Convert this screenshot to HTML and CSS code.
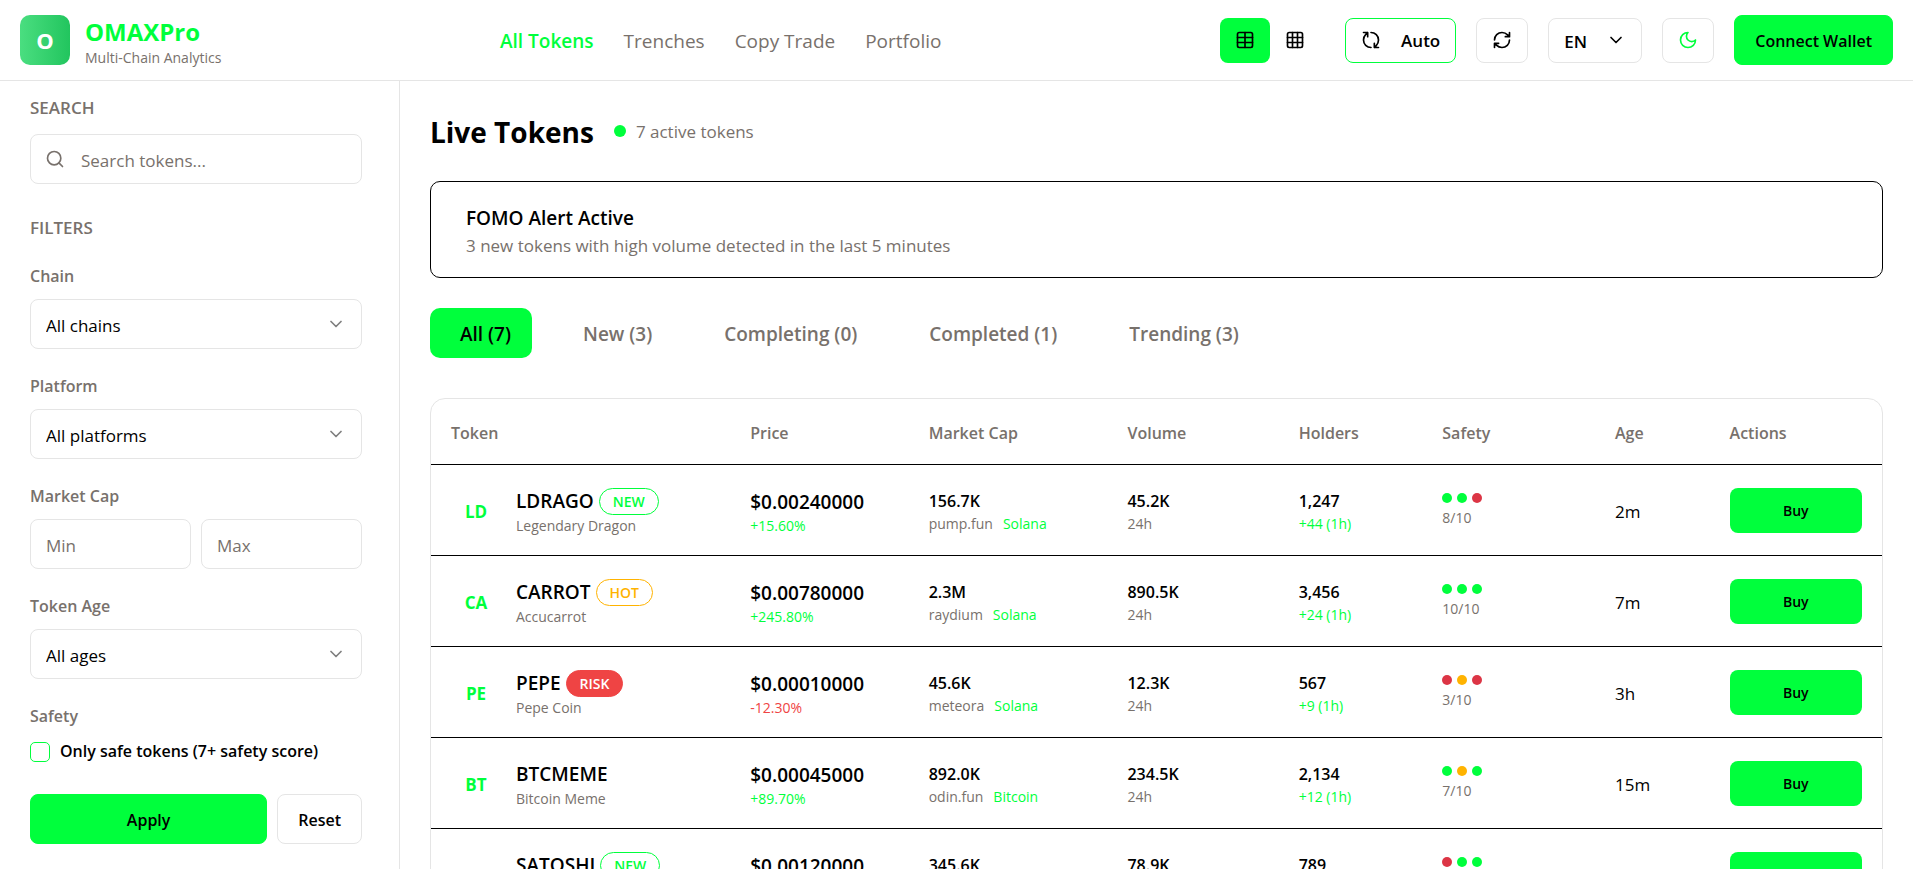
FILE: index.html
```html
<!DOCTYPE html>
<html lang="en">
<head>
<meta charset="utf-8">
<title>OMAXPro</title>
<link rel="stylesheet" href="styles.css">
</head>
<body>
<svg class="sprite" aria-hidden="true">
  <symbol id="i-table" viewBox="0 0 24 24"><path d="M12 3v18M3 9h18M3 15h18"/><rect x="3" y="3" width="18" height="18" rx="2"/></symbol>
  <symbol id="i-grid" viewBox="0 0 24 24"><path d="M9 3v18M15 3v18M3 9h18M3 15h18"/><rect x="3" y="3" width="18" height="18" rx="2"/></symbol>
  <symbol id="i-refresh" viewBox="0 0 24 24"><path d="M3 12a9 9 0 0 1 9-9 9.75 9.75 0 0 1 6.74 2.74L21 8M21 3v5h-5M21 12a9 9 0 0 1-9 9 9.75 9.75 0 0 1-6.74-2.74L3 16M8 16H3v5"/></symbol>
  <symbol id="i-chevron" viewBox="0 0 24 24"><path d="m6 9 6 6 6-6"/></symbol>
  <symbol id="i-moon" viewBox="0 0 24 24"><path d="M12 3a6 6 0 0 0 9 9 9 9 0 1 1-9-9Z"/></symbol>
  <symbol id="i-search" viewBox="0 0 24 24"><circle cx="11" cy="11" r="8"/><path d="m21 21-4.3-4.3"/></symbol>
</svg>
<div class="app">
  <header class="topbar">
    <div class="brand">
      <div class="brand-mark">O</div>
      <div class="brand-text">
        <div class="brand-name">OMAXPro</div>
        <div class="brand-sub">Multi-Chain Analytics</div>
      </div>
    </div>
    <nav class="nav">
      <a class="nav-link active" href="#">All Tokens</a>
      <a class="nav-link" href="#">Trenches</a>
      <a class="nav-link" href="#">Copy Trade</a>
      <a class="nav-link" href="#">Portfolio</a>
    </nav>
    <div class="tools">
      <div class="views">
        <button class="view on" aria-label="Table view"><svg class="icon"><use href="#i-table"/></svg></button>
        <button class="view" aria-label="Grid view"><svg class="icon"><use href="#i-grid"/></svg></button>
      </div>
      <button class="tool auto"><svg class="icon turned"><use href="#i-refresh"/></svg>Auto</button>
      <button class="tool" aria-label="Refresh"><svg class="icon"><use href="#i-refresh"/></svg></button>
      <div class="select-wrap lang">
        <select class="tool" aria-label="Language"><option>EN</option></select>
        <svg class="icon chevron"><use href="#i-chevron"/></svg>
      </div>
      <button class="tool moon" aria-label="Dark mode"><svg class="icon"><use href="#i-moon"/></svg></button>
      <button class="btn primary">Connect Wallet</button>
    </div>
  </header>
  <div class="body">
    <aside class="sidebar">
      <section class="search">
        <h2 class="side-title"><label for="q">SEARCH</label></h2>
        <div class="search-wrap">
          <svg class="icon"><use href="#i-search"/></svg>
          <input class="field" id="q" type="text" placeholder="Search tokens...">
        </div>
      </section>
      <section class="filters">
        <h2 class="side-title">FILTERS</h2>
        <div class="group">
          <label class="label" for="chain">Chain</label>
          <div class="select-wrap"><select class="field" id="chain"><option>All chains</option></select><svg class="icon chevron dim"><use href="#i-chevron"/></svg></div>
        </div>
        <div class="group">
          <label class="label" for="platform">Platform</label>
          <div class="select-wrap"><select class="field" id="platform"><option>All platforms</option></select><svg class="icon chevron dim"><use href="#i-chevron"/></svg></div>
        </div>
        <div class="group">
          <label class="label" for="cap-min">Market Cap</label>
          <div class="pair">
            <input class="field" id="cap-min" type="text" placeholder="Min">
            <input class="field" type="text" placeholder="Max" aria-label="Market cap maximum">
          </div>
        </div>
        <div class="group">
          <label class="label" for="age">Token Age</label>
          <div class="select-wrap"><select class="field" id="age"><option>All ages</option></select><svg class="icon chevron dim"><use href="#i-chevron"/></svg></div>
        </div>
        <div class="group">
          <span class="label">Safety</span>
          <label class="check"><input type="checkbox">Only safe tokens (7+ safety score)</label>
        </div>
      </section>
      <div class="actions">
        <button class="btn primary grow">Apply</button>
        <button class="btn outline">Reset</button>
      </div>
    </aside>
    <main class="main">
      <div class="title-row">
        <h1>Live Tokens</h1>
        <div class="live"><span class="live-dot"></span>7 active tokens</div>
      </div>
      <div class="alert">
        <div class="alert-title">FOMO Alert Active</div>
        <div class="alert-text">3 new tokens with high volume detected in the last 5 minutes</div>
      </div>
      <div class="tabs">
        <button class="tab on">All (7)</button>
        <button class="tab">New (3)</button>
        <button class="tab">Completing (0)</button>
        <button class="tab">Completed (1)</button>
        <button class="tab">Trending (3)</button>
      </div>
      <div class="card">
        <table class="tokens">
          <colgroup><col class="c-token"><col class="c-price"><col class="c-cap"><col class="c-volume"><col class="c-holders"><col class="c-safety"><col class="c-age"><col class="c-actions"></colgroup>
          <thead>
            <tr><th>Token</th><th>Price</th><th>Market Cap</th><th>Volume</th><th>Holders</th><th>Safety</th><th>Age</th><th>Actions</th></tr>
          </thead>
          <tbody>
            <tr>
              <td><div class="token"><span class="avatar">LD</span><div><div class="name">LDRAGO<span class="badge new">NEW</span></div><div class="small">Legendary Dragon</div></div></div></td>
              <td><div class="price">$0.00240000</div><div class="small up">+15.60%</div></td>
              <td><div class="num">156.7K</div><div class="small source">pump.fun<span class="up">Solana</span></div></td>
              <td><div class="num">45.2K</div><div class="small">24h</div></td>
              <td><div class="num">1,247</div><div class="small up">+44 (1h)</div></td>
              <td class="safety"><div class="dots"><i class="g"></i><i class="g"></i><i class="r"></i></div><div class="small">8/10</div></td>
              <td>2m</td>
              <td><button class="buy">Buy</button></td>
            </tr>
            <tr>
              <td><div class="token"><span class="avatar">CA</span><div><div class="name">CARROT<span class="badge hot">HOT</span></div><div class="small">Accucarrot</div></div></div></td>
              <td><div class="price">$0.00780000</div><div class="small up">+245.80%</div></td>
              <td><div class="num">2.3M</div><div class="small source">raydium<span class="up">Solana</span></div></td>
              <td><div class="num">890.5K</div><div class="small">24h</div></td>
              <td><div class="num">3,456</div><div class="small up">+24 (1h)</div></td>
              <td class="safety"><div class="dots"><i class="g"></i><i class="g"></i><i class="g"></i></div><div class="small">10/10</div></td>
              <td>7m</td>
              <td><button class="buy">Buy</button></td>
            </tr>
            <tr>
              <td><div class="token"><span class="avatar">PE</span><div><div class="name">PEPE<span class="badge risk">RISK</span></div><div class="small">Pepe Coin</div></div></div></td>
              <td><div class="price">$0.00010000</div><div class="small down">-12.30%</div></td>
              <td><div class="num">45.6K</div><div class="small source">meteora<span class="up">Solana</span></div></td>
              <td><div class="num">12.3K</div><div class="small">24h</div></td>
              <td><div class="num">567</div><div class="small up">+9 (1h)</div></td>
              <td class="safety"><div class="dots"><i class="r"></i><i class="o"></i><i class="r"></i></div><div class="small">3/10</div></td>
              <td>3h</td>
              <td><button class="buy">Buy</button></td>
            </tr>
            <tr>
              <td><div class="token"><span class="avatar">BT</span><div><div class="name">BTCMEME</div><div class="small">Bitcoin Meme</div></div></div></td>
              <td><div class="price">$0.00045000</div><div class="small up">+89.70%</div></td>
              <td><div class="num">892.0K</div><div class="small source">odin.fun<span class="up">Bitcoin</span></div></td>
              <td><div class="num">234.5K</div><div class="small">24h</div></td>
              <td><div class="num">2,134</div><div class="small up">+12 (1h)</div></td>
              <td class="safety"><div class="dots"><i class="g"></i><i class="o"></i><i class="g"></i></div><div class="small">7/10</div></td>
              <td>15m</td>
              <td><button class="buy">Buy</button></td>
            </tr>
            <tr>
              <td><div class="token"><span class="avatar">SA</span><div><div class="name">SATOSHI<span class="badge new">NEW</span></div><div class="small">Satoshi</div></div></div></td>
              <td><div class="price">$0.00120000</div><div class="small up">+34.20%</div></td>
              <td><div class="num">345.6K</div><div class="small source">odin.fun<span class="up">Bitcoin</span></div></td>
              <td><div class="num">78.9K</div><div class="small">24h</div></td>
              <td><div class="num">789</div><div class="small up">+18 (1h)</div></td>
              <td class="safety"><div class="dots"><i class="r"></i><i class="g"></i><i class="g"></i></div><div class="small">8/10</div></td>
              <td>5m</td>
              <td><button class="buy">Buy</button></td>
            </tr>
          </tbody>
        </table>
      </div>
    </main>
  </div>
</div>
</body>
</html>
```

FILE: styles.css
```css
:root {
  --green: #00ff3c;
  --muted: #78716c;
  --line: #e5e5e5;
  --orange: #ffb300;
  --red: #ef4444;
}
* { box-sizing: border-box; }
body {
  margin: 0;
  font: 17px/25px "Open Sans", "Noto Sans", sans-serif;
  color: #000;
  background: #fff;
}
button, input, select { font: inherit; color: inherit; }
button { cursor: pointer; }
h1, h2 { margin: 0; }
.sprite { display: none; }
.icon {
  width: 20px;
  height: 20px;
  flex: none;
  fill: none;
  stroke: currentColor;
  stroke-width: 2;
  stroke-linecap: round;
  stroke-linejoin: round;
}
.app {
  display: flex;
  flex-direction: column;
  height: 100vh;
  padding-right: 7px;
  overflow: hidden;
}

/* Top bar */
.topbar {
  display: flex;
  flex: none;
  justify-content: space-between;
  align-items: center;
  height: 81px;
  padding: 0 20px;
  border-bottom: 1px solid var(--line);
}
.brand { display: flex; align-items: center; gap: 15px; }
.brand-mark {
  display: grid;
  place-items: center;
  width: 50px;
  height: 50px;
  border-radius: 10px;
  background: linear-gradient(90deg, #4ade80, #22c55e);
  color: #fff;
  font-size: 22px;
  font-weight: 700;
}
.brand-text { padding-top: 4px; }
.brand-name { color: var(--green); font-size: 24px; line-height: 32px; font-weight: 700; }
.brand-sub { color: var(--muted); font-size: 14px; line-height: 20px; }
.nav { display: flex; gap: 30px; padding-top: 2px; }
.nav-link { color: var(--muted); font-size: 19px; text-decoration: none; }
.nav-link.active { color: var(--green); font-weight: 600; }
.tools { display: flex; align-items: center; gap: 20px; }
.views { display: flex; margin-right: 5px; }
.view, .tool {
  display: flex;
  align-items: center;
  justify-content: center;
  height: 45px;
  border: 1px solid var(--line);
  border-radius: 8px;
  background: #fff;
}
.view { width: 50px; border: 0; }
.view.on { background: var(--green); }
.tool { min-width: 52px; padding: 0 15px; font-weight: 600; }
.tool.auto { gap: 20px; border-color: var(--green); }
.tool.moon { color: var(--green); }
.turned { transform: rotate(90deg); }
.select-wrap { position: relative; }
.select-wrap select { width: 100%; padding-top: 2px; appearance: none; }
.chevron {
  position: absolute;
  right: 16px;
  top: 50%;
  margin-top: -10px;
  pointer-events: none;
}
.dim { opacity: 0.5; }
.lang { width: 94px; }
.btn {
  height: 50px;
  padding: 2px 20px 0;
  border: 1px solid var(--line);
  border-radius: 8px;
  background: #fff;
  font-size: 16px;
  font-weight: 600;
}
.btn.primary { border-color: var(--green); background: var(--green); }
.grow { flex: 1; }

/* Sidebar */
.body { display: flex; flex: 1; min-height: 0; }
.sidebar {
  flex: none;
  width: 400px;
  padding: 13px 37px 25px 30px;
  border-right: 1px solid var(--line);
  overflow: auto;
  scrollbar-width: none;
}
.side-title {
  height: 25px;
  padding-top: 1px;
  color: var(--muted);
  font-size: 17px;
  line-height: 25px;
  font-weight: 600;
}
.search { display: flex; flex-direction: column; gap: 15px; margin-bottom: 30px; }
.search-wrap { display: flex; align-items: center; position: relative; color: var(--muted); }
.search-wrap .icon { position: absolute; left: 15px; }
.search-wrap .field { padding-left: 50px; }
.field {
  width: 100%;
  min-width: 0;
  height: 50px;
  padding: 2px 15px 0;
  border: 1px solid var(--line);
  border-radius: 8px;
  background: #fff;
}
.field::placeholder { color: var(--muted); opacity: 1; }
.filters { display: flex; flex-direction: column; gap: 25px; }
.group { display: flex; flex-direction: column; gap: 10px; }
.label { color: var(--muted); font-size: 16px; font-weight: 600; }
.pair { display: flex; gap: 10px; }
.check { display: flex; align-items: center; gap: 10px; font-size: 16px; font-weight: 600; }
.check input {
  appearance: none;
  width: 20px;
  height: 20px;
  margin: 0;
  border: 1px solid var(--green);
  border-radius: 5px;
}
.actions { display: flex; gap: 10px; margin-top: 30px; }

/* Main */
.main {
  flex: 1;
  min-width: 0;
  padding: 30px;
  overflow: auto;
  scrollbar-width: none;
}
.title-row { display: flex; align-items: center; gap: 20px; margin-bottom: 30px; }
h1 { padding-top: 2px; font-size: 28px; line-height: 38px; font-weight: 700; }
.live { display: flex; align-items: center; gap: 10px; color: var(--muted); }
.live-dot { width: 12px; height: 12px; border-radius: 50%; background: var(--green); }
.alert {
  margin-bottom: 30px;
  padding: 21px 35px 19px;
  border: 1px solid #000;
  border-radius: 10px;
}
.alert-title { font-size: 19px; line-height: 30px; font-weight: 600; }
.alert-text { color: var(--muted); }
.tabs { display: flex; gap: 21px; margin-bottom: 40px; }
.tab {
  height: 50px;
  padding: 2px 21px 0 30px;
  border: 0;
  border-radius: 10px;
  background: #fff;
  color: var(--muted);
  font-size: 19px;
  font-weight: 600;
}
.tab.on { background: var(--green); color: #000; }

/* Token table */
.card { border: 1px solid var(--line); border-radius: 15px; overflow: hidden; }
.tokens { width: 100%; table-layout: fixed; border-collapse: collapse; }
.c-token { width: 22%; }
.c-price { width: 12.3%; }
.c-cap { width: 13.7%; }
.c-volume { width: 11.8%; }
.c-holders { width: 9.9%; }
.c-safety { width: 11.9%; }
.c-age { width: 7.9%; }
.c-actions { width: 10.5%; }
.tokens th {
  height: 65px;
  padding: 4px 0 0;
  color: var(--muted);
  font-size: 16px;
  font-weight: 600;
  text-align: left;
}
.tokens td { height: 91px; padding: 4px 0 0; vertical-align: middle; white-space: nowrap; }
.tokens th:first-child, .tokens td:first-child { padding-left: 20px; }
.tokens td.safety { padding-top: 2px; }
.tokens td:last-child { padding: 2px 20px 0 0; }
.tokens tr { border-bottom: 1px solid #000; }
.tokens tbody tr:last-child { border-bottom: 0; }
.token { display: flex; align-items: center; gap: 15px; }
.avatar {
  display: grid;
  place-items: center;
  width: 50px;
  height: 50px;
  color: var(--green);
  font-weight: 700;
}
.name { display: flex; align-items: center; gap: 5px; height: 28px; font-size: 19px; font-weight: 600; }
.price { font-size: 19px; line-height: 28px; font-weight: 600; }
.num { font-size: 16px; font-weight: 600; }
.small { color: var(--muted); font-size: 14px; line-height: 20px; }
.small.up, .up { color: var(--green); }
.small.down { color: var(--red); }
.source { display: flex; gap: 10px; }
.badge {
  padding: 0 13px;
  border: 1px solid;
  border-radius: 14px;
  font-size: 14px;
  line-height: 25px;
}
.new { color: var(--green); }
.hot { color: var(--orange); }
.risk { border-color: var(--red); background: var(--red); color: #fff; }
.dots { display: flex; gap: 5px; margin-bottom: 5px; }
.dots i { width: 10px; height: 10px; border-radius: 50%; }
.g { background: var(--green); }
.o { background: var(--orange); }
.r { background: #dc3545; }
.buy {
  display: block;
  width: 100%;
  height: 45px;
  border: 0;
  border-radius: 8px;
  background: var(--green);
  font-size: 14px;
  font-weight: 600;
}
```
